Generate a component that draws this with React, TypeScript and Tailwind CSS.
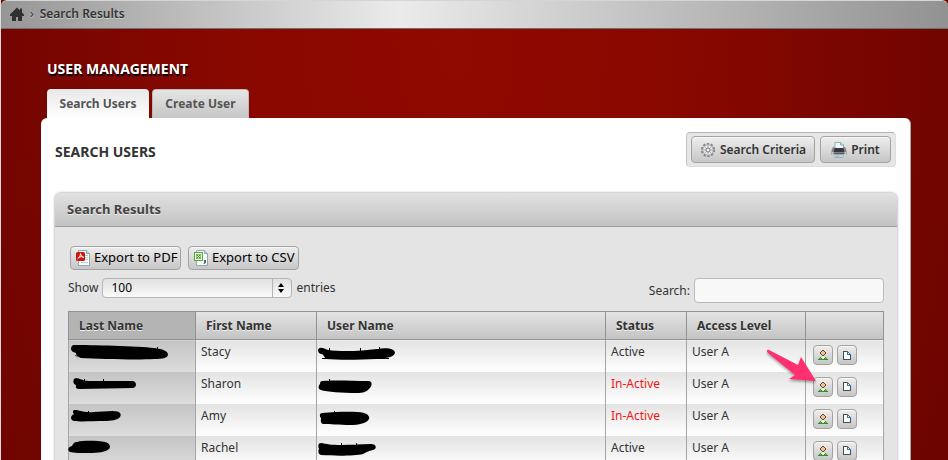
type User = {
  first: string;
  active: boolean;
  lastMark: string;
  userMark: string;
};

const users: User[] = [
  {
    first: "Stacy",
    active: true,
    lastMark:
      "M5 5C20 5 70 6 85 8 94 9 99 11 99 15 98 18 94 19 85 19 70 20 30 19 12 18 8 17 7 15 7 13 4 12 2 11 2 9 2 7 3 5 5 5ZM7 15l1 3 1 1-3-4ZM88 7h1v3h-1Z",
    userMark:
      "M3 8C5 7 8 9 11 10 25 12 45 11 60 9 71 7 78 9 78 13 77 17 70 18 60 19 40 20 20 20 9 19 7 17 7 15 5 14 2 14 1 12 1 10 1 9 2 8 3 8ZM5 18h67v1H5ZM12 8h1v4h-1ZM43 8h1v4h-1ZM62 7h1v4h-1Z",
  },
  {
    first: "Sharon",
    active: false,
    lastMark:
      "M7 6C10 6 14 9 20 9L64 9C68 10 68 15 64 16L10 17C6 17 7 14 7 13 4 12 4 9 5 7ZM15 7h1v4h-1ZM34 7h1v4h-1Z",
    userMark:
      "M5 9C20 8 35 9 52 9 56 10 55 14 52 17 49 20 46 21 40 21 25 21 10 20 4 18 1 17 1 14 3 12 3 10 4 9 5 9ZM12 7h1v4h-1Z",
  },
  {
    first: "Amy",
    active: false,
    lastMark:
      "M6 6C10 6 15 9 24 8L44 7C51 7 53 10 51 13 49 16 42 17 35 17 25 17 12 18 5 17 1 16 1 12 5 10 3 8 4 6 6 6ZM19 7h1v3h-1Z",
    userMark:
      "M5 9C20 8 38 7 47 9 51 10 53 13 52 15 50 19 42 21 33 21 23 21 12 20 6 20 3 19 4 16 4 14 2 12 3 9 5 9ZM17 7h1v4h-1Z",
  },
  {
    first: "Rachel",
    active: true,
    lastMark:
      "M8 6C16 4 30 5 36 6 41 7 42 11 40 13 37 16 29 17 20 17 12 17 5 17 1 16-2 14-1 11 3 10 4 8 5 6 8 6Z",
    userMark:
      "M4 7C9 8 15 9 24 9L54 8C60 8 60 13 56 14 50 15 49 17 46 18 38 20 18 20 4 19 1 18 1 15 2 13 1 10 1 7 4 7ZM24 7h1v4h-1ZM39 7h1v4h-1Z",
  },
];

const raised =
  "border border-[#a3a3a3] bg-linear-to-b from-[#eeeeee] to-[#c6c6c6] shadow-[inset_0_1px_0_#f7f7f7]";

function HomeIcon() {
  return (
    <svg width="14" height="14" viewBox="0 0 14 14" fill="#303030">
      <path d="M7 .5 0 7.5V9h2v5h4v-4h2v4h4V9h2V7.500L12 5.500V1.500h-2v2Z" />
    </svg>
  );
}

function GearIcon() {
  return (
    <svg width="16" height="16" viewBox="0 0 16 16" fill="none">
      <circle cx="8" cy="8" r="6" stroke="#85858b" strokeWidth="2.2" strokeDasharray="2.3 1.47" />
      <circle cx="8" cy="8" r="5.200" fill="#e4e4ea" stroke="#a0a0a7" strokeWidth=".8" />
      <path d="M8 3.5v9M3.5 8h9M4.8 4.8l6.4 6.4M11.2 4.8l-6.4 6.4" stroke="#a7a7ae" strokeWidth=".8" />
      <circle cx="8" cy="8" r="2" fill="#f1f1f3" stroke="#77777e" />
    </svg>
  );
}

function PrinterIcon() {
  return (
    <svg width="16" height="16" viewBox="0 0 16 16">
      <path d="M4 7V.5h6L12.5 3v4Z" fill="#edf7f8" stroke="#8caeb5" />
      <path d="M9.5.5V3h3" fill="#b8d8dc" stroke="#8caeb5" />
      <path d="M2 5h1.5v2h9V5H14l1.5 3v5h-15V8Z" fill="#85858b" />
      <path d="M3.5 6h9l1 5h-11Z" fill="#36363d" />
      <path d="M1 10h14v3H1Z" fill="#c4c4ca" />
      <path d="M2.5 10.5h11v1.3h-11Z" fill="#404046" />
      <path d="M4 12.5h8v3H4Z" fill="#f4fafb" stroke="#7c959e" strokeWidth=".7" />
      <path d="M5 13.5h3v1H5Z" fill="#6775d8" />
      <path d="M8 13.5h3v1H8Z" fill="#73bd91" />
    </svg>
  );
}

function PdfIcon() {
  return (
    <svg width="16" height="16" viewBox="0 0 16 16">
      <path d="M2.500.5h8l3 3v12h-11Z" fill="#f9fcfc" stroke="#8fa9ac" />
      <path d="M10.500.5v3h3" fill="#c8dcde" stroke="#8fa9ac" />
      <path d="M9 5.5h3M9 7.5h3M9 9.5h3M5 12.5h7" stroke="#bdcccd" />
      <rect y="2" width="9" height="9" rx="1.5" fill="#d3160d" />
      <path d="M4.500 3.500c.5 2.300 1.500 3.500 3.500 4M4.500 3.500C4.500 6 3 8 1.500 9M2.500 7.500c1.500-1 3.500-1 5-.5" fill="none" stroke="#fff" />
    </svg>
  );
}

function CsvIcon() {
  return (
    <svg width="16" height="16" viewBox="0 0 16 16">
      <path d="M2.500.5h8l3 3v12h-11Z" fill="#f9fcfc" stroke="#8fa9ac" />
      <path d="M10.500.5v3h3" fill="#c8dcde" stroke="#8fa9ac" />
      <rect x=".5" y="2.500" width="8" height="8" fill="#eff8e8" stroke="#59a435" />
      <rect x="2.500" y="4.500" width="4" height="4" fill="#d9ebcc" stroke="#8cc270" />
      <path d="m2.500 4.500 4 4M6.500 4.500l-4 4" stroke="#458d2c" />
      <path d="M10 10h2v2.5L10.5 14H9.500l.5-1.5Z" fill="#586467" />
    </svg>
  );
}

function PersonIcon() {
  return (
    <svg width="10" height="10" viewBox="0 0 10 10" shapeRendering="crispEdges">
      <path d="M4 0h2v1h1v1h1v2H7v1H6v1H4V5H3V4H2V2h1V1h1Z" fill="#6d4030" />
      <path d="M4 1h2v1h1v2H6v1H4V4H3V2h1Z" fill="#f3c18d" />
      <path d="M2 7h2V6h2v1h2v1h1v1h1v1H0V9h1V8h1Z" fill="#2f8e2c" />
      <path d="M4 6h2v1h1v1H6v1H4V8H3V7h1Z" fill="#f0ead8" />
      <path d="M2 8h1v1H2ZM7 8h1v1H7Z" fill="#79cf69" />
    </svg>
  );
}

function PageIcon() {
  return (
    <svg width="8" height="9" viewBox="0 0 8 9" fill="none" shapeRendering="crispEdges">
      <path d="M.5.5h4l3 3v5h-7Z" fill="#fff" stroke="#4c4c4c" />
      <path d="M4.5.5v3h3M4.5.5l3 3" stroke="#2879a7" />
    </svg>
  );
}

function Redaction({ d }: { d: string }) {
  return (
    <svg className="block overflow-visible" width="100" height="24" viewBox="0 0 100 24">
      <path d={d} />
    </svg>
  );
}

function Pointer() {
  return (
    <svg
      className="pointer-events-none absolute -top-7 -left-12 drop-shadow-[0_2px_1px_#00000050]"
      width="52"
      height="36"
      viewBox="0 0 52 36"
      fill="#ff2f70"
    >
      <path d="M4 1 33 16 36 8 51 32 24 30 30 26 3 4C1 2 2 0 4 1Z" />
    </svg>
  );
}

function UserTable() {
  const head = "border border-[#929292] pl-2.5 text-left font-bold";
  const cell = "border-x border-[#a5a5a5] pl-[5px] pt-1 align-top leading-4";
  const shade = "bg-linear-to-b from-[#e3e3e3] to-white";

  return (
    <table className="w-full table-fixed border-collapse text-[12px]">
      <colgroup>
        <col className="w-[127px]" />
        <col className="w-[121px]" />
        <col />
        <col className="w-[81px]" />
        <col className="w-[119px]" />
        <col className="w-[78px]" />
      </colgroup>
      <thead>
        <tr className="h-7 bg-linear-to-b from-[#e3e3e3] to-[#c3c3c3] [text-shadow:0_1px_0_#eee]">
          <th className={`${head} bg-[#b4b4b4]`}>Last Name</th>
          <th className={head}>First Name</th>
          <th className={head}>User Name</th>
          <th className={head}>Status</th>
          <th className={head}>Access Level</th>
          <th className={head} aria-label="Actions" />
        </tr>
      </thead>
      <tbody>
        {users.map((user, i) => (
          <tr key={user.first} className="h-8">
            <td className="border-x border-[#a5a5a5] bg-linear-to-b from-[#c4c4c4] to-[#dddddd] align-top">
              <Redaction d={user.lastMark} />
            </td>
            <td className={`${cell} ${shade}`}>{user.first}</td>
            <td className={`border-x border-[#a5a5a5] align-top ${shade}`}>
              <Redaction d={user.userMark} />
            </td>
            <td className={`${cell} ${shade} ${user.active ? "" : "text-[#f21616]"}`}>
              {user.active ? "Active" : "In-Active"}
            </td>
            <td className={`${cell} ${shade}`}>User A</td>
            <td className={`border-x border-[#a5a5a5] pt-[5px] pl-[7px] align-top ${shade}`}>
              <div className="flex gap-1">
                <div className="relative">
                  <button
                    aria-label="View user"
                    className={`flex size-5 items-center justify-center rounded ${raised}`}
                  >
                    <PersonIcon />
                  </button>
                  {i === 1 && <Pointer />}
                </div>
                <button
                  aria-label="Open record"
                  className={`flex size-5 items-center justify-center rounded ${raised}`}
                >
                  <PageIcon />
                </button>
              </div>
            </td>
          </tr>
        ))}
      </tbody>
    </table>
  );
}

export default function App() {
  return (
    <div className="h-screen overflow-hidden bg-[#dedede] pl-px font-['Noto_Sans',sans-serif] text-[#333]">
      <div className="min-h-full bg-[radial-gradient(ellipse_60%_200%_at_48%_10%,#8f0a00,#8a0800_35%,#6b0400)]">
        <nav className="flex h-[29px] items-center gap-1.5 rounded-t-md border-t border-b border-t-[#d5d5d5] border-b-[#707070] bg-linear-to-r from-[#969696] via-[#ebebeb] via-42% to-[#929292] pb-0.5 pl-[9px] text-[12px] font-semibold [text-shadow:0_1px_0_#ccc]">
          <a href="#" aria-label="Home">
            <HomeIcon />
          </a>
          <span className="font-normal">›</span>
          <span>Search Results</span>
        </nav>

        <main className="pt-[30px] pr-[37px] pl-10">
          <h1 className="pl-1.5 text-[14px] leading-5 font-bold text-white [text-shadow:1px_2px_1px_#000]">
            USER MANAGEMENT
          </h1>
          <div className="mt-2.5 flex gap-[3px] pl-1.5 text-[12px] font-bold text-[#555]">
            <button className="h-[29px] w-[102px] rounded-t bg-linear-to-b from-[#e8e8e8] to-white">
              Search Users
            </button>
            <button className="h-[29px] w-[97px] rounded-t border border-b-0 border-[#bbb] bg-linear-to-b from-[#e5e5e5] to-[#c6c6c6]">
              Create User
            </button>
          </div>

          <section className="rounded-t-md border-r border-[#aaa] bg-white pt-3.5 pr-[13px] pl-3.5">
            <div className="flex items-start justify-between pr-px">
              <h2 className="pt-2.5 text-[14px] leading-5 font-bold">SEARCH USERS</h2>
              <div className="flex gap-[5px] rounded border border-t-[#b5b5b5] border-r-[#ddd] border-b-[#ddd] border-l-[#c5c5c5] bg-[#e6e6e6] px-1 py-[3px] text-[12px] font-semibold">
                <button className={`flex h-[27px] w-[124px] items-center justify-center gap-1 rounded ${raised}`}>
                  <GearIcon />
                  Search Criteria
                </button>
                <button className={`flex h-[27px] w-[71px] items-center justify-center gap-1 rounded ${raised}`}>
                  <PrinterIcon />
                  Print
                </button>
              </div>
            </div>

            <div className="mt-[26px] rounded-t-md bg-[#e4e4e4] shadow-[0_0_2px_1px_#c9c9c9]">
              <h3 className="flex h-[34px] items-center rounded-t-md border-b border-[#9e9e9e] bg-linear-to-b from-[#e1e1e1] to-[#c3c3c3] pl-3 text-[13px] font-bold text-[#444] [text-shadow:0_1px_0_#eee]">
                Search Results
              </h3>
              <div className="px-[13px] pt-[19px]">
                <div className="flex gap-[7px] pl-0.5 text-[13px] text-black">
                  <button className={`flex h-6 w-[111px] items-center gap-0.5 rounded pl-[5px] whitespace-nowrap ${raised}`}>
                    <PdfIcon />
                    Export to PDF
                  </button>
                  <button className={`flex h-6 w-[111px] items-center gap-0.5 rounded pl-[5px] whitespace-nowrap ${raised}`}>
                    <CsvIcon />
                    Export to CSV
                  </button>
                </div>

                <div className="mt-2 flex items-start justify-between text-[12px]">
                  <div className="flex items-center gap-1">
                    <label htmlFor="length">Show</label>
                    <div className="relative">
                      <select
                        id="length"
                        className="block h-5 w-[190px] appearance-none rounded border border-[#b5b5b5] bg-linear-to-b from-[#e0e0e0] to-[#fafafa] pl-2 text-black"
                      >
                        <option>100</option>
                      </select>
                      <svg
                        className="pointer-events-none absolute top-px right-px"
                        width="19"
                        height="18"
                        viewBox="0 0 19 18"
                      >
                        <path d="M.5 0v18" stroke="#b5b5b5" />
                        <path d="m9 4 3 4H6ZM6 10h6l-3 4Z" />
                      </svg>
                    </div>
                    <span>entries</span>
                  </div>
                  <div className="flex items-center gap-1">
                    <label htmlFor="search">Search:</label>
                    <input
                      id="search"
                      className="h-[25px] w-[190px] rounded border border-[#bbb] bg-[#f8f8f8] px-1"
                    />
                  </div>
                </div>

                <div className="mt-2">
                  <UserTable />
                </div>
              </div>
            </div>
          </section>
        </main>
      </div>
    </div>
  );
}
